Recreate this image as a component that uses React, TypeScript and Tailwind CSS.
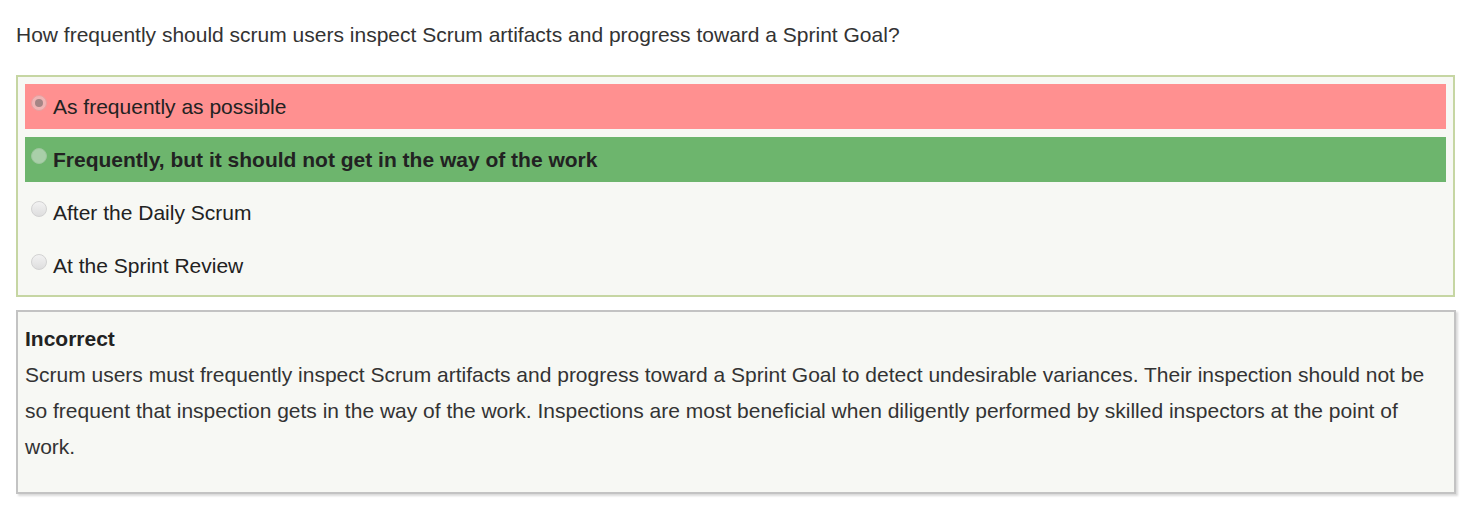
const options = [
  { label: "As frequently as possible", state: "wrong" },
  { label: "Frequently, but it should not get in the way of the work", state: "right" },
  { label: "After the Daily Scrum", state: "none" },
  { label: "At the Sprint Review", state: "none" },
];

function Radio({ state }: { state: string }) {
  if (state === "wrong") {
    return (
      <span className="mt-[11px] flex h-[16px] w-[16px] shrink-0 items-center justify-center rounded-full bg-[#f0b4b4] border border-[#e8a0a0]">
        <span className="h-[8px] w-[8px] rounded-full bg-[#a58585]" />
      </span>
    );
  }
  if (state === "right") {
    return <span className="mt-[11px] h-[16px] w-[16px] shrink-0 rounded-full bg-[#a9cfa9] border border-[#9cc69c]" />;
  }
  return (
    <span className="mt-[11px] h-[16px] w-[16px] shrink-0 rounded-full border border-[#d2d2d2] bg-gradient-to-b from-[#f2f2f2] to-[#dedede]" />
  );
}

export default function App() {
  return (
    <div className="min-h-screen bg-white px-4 pt-[20px] font-['Liberation_Sans',Arial,sans-serif] text-[#333]">
      <p className="text-[21px] leading-[30px]">
        How frequently should scrum users inspect Scrum artifacts and progress toward a Sprint Goal?
      </p>

      <div className="mt-[25px] flex flex-col gap-[8px] border-2 border-[#c6d6a3] bg-[#f7f8f4] p-[7px] mr-[1px]">
        {options.map((o) => (
          <div
            key={o.label}
            className={`flex h-[45px] items-start gap-[6px] pl-[6px] ${
              o.state === "wrong" ? "bg-[#ff9090]" : o.state === "right" ? "bg-[#6db56d]" : ""
            }`}
          >
            <Radio state={o.state} />
            <span
              className={`pt-[10px] text-[21px] leading-[26px] text-[#222] ${o.state === "right" ? "font-bold" : ""}`}
            >
              {o.label}
            </span>
          </div>
        ))}
      </div>

      <div className="mt-[13px] border-2 border-[#c3c3c3] bg-[#f7f8f4] px-[7px] pt-[13px] pb-[27px] shadow-[2px_2px_2px_rgba(0,0,0,0.15)]">
        <div className="text-[21px] font-bold leading-[28px] text-[#222]">Incorrect</div>
        <p className="mt-[4px] text-[21px] leading-[36px] text-[#333]">
          Scrum users must frequently inspect Scrum artifacts and progress toward a Sprint Goal to detect undesirable
          variances. Their inspection should not be so frequent that inspection gets in the way of the work.
          Inspections are most beneficial when diligently performed by skilled inspectors at the point of work.
        </p>
      </div>
    </div>
  );
}
